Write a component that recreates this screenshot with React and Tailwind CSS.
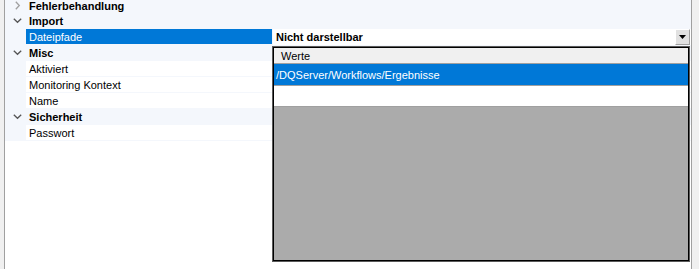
import React from "react";

const font = { fontFamily: '"Liberation Sans", Arial, sans-serif' };

function Chevron({ open, light }) {
  return (
    <svg width="9" height="9" viewBox="0 0 9 9" className="block">
      {open ? (
        <path d="M0.8 2.8 L4.5 6.3 L8.2 2.8" fill="none" stroke="#555" strokeWidth="1.3" />
      ) : (
        <path d="M2.8 0.8 L6.3 4.5 L2.8 8.2" fill="none" stroke={light ? "#a0a0a0" : "#555"} strokeWidth="1.3" />
      )}
    </svg>
  );
}

function Category({ label, open, light, first }) {
  return (
    <div className={`flex ${first ? "h-[13px] items-end" : "h-[16px]"} bg-[#f4f7fc] shrink-0`}>
      <div className="flex h-[15px] w-full items-center">
        <div className="w-[21px] flex justify-center pl-[3px]">
          <Chevron open={open} light={light} />
        </div>
        <span className="pl-[3px] pt-[1px] text-[11px] font-bold text-black leading-[15px]">{label}</span>
      </div>
    </div>
  );
}

function Prop({ label }) {
  return (
    <div className="flex h-[16px] shrink-0 bg-[#f4f7fc]">
      <div className="w-[21px] shrink-0" />
      <div className="w-[246px] h-[15px] pl-[3px] pt-[1px] text-[11px] leading-[15px] bg-white text-black">
        {label}
      </div>
      <div className="w-[1px] shrink-0" />
      <div className="flex-1 h-[15px] bg-white" />
    </div>
  );
}

export default function App() {
  return (
    <div className="relative w-[699px] h-[269px] overflow-hidden bg-[#f0f0f0] flex" style={font}>
      <div className="w-[4px] shrink-0 bg-[#f0f0f0]" />
      <div className="w-[1px] shrink-0 bg-[#a0a0a0]" />
      <div className="w-[686px] shrink-0 bg-white flex flex-col">
        <Category label="Fehlerbehandlung" open={false} light first />
        <Category label="Import" open />
        <div className="flex h-[16px] shrink-0 bg-[#f4f7fc]">
          <div className="w-[21px] shrink-0" />
          <div className="w-[246px] h-[15px] pl-[3px] pt-[1px] text-[11px] leading-[15px] bg-[#0078d7] text-white">
            Dateipfade
          </div>
          <div className="w-[1px] shrink-0" />
          <div className="flex-1 h-[16px] bg-white flex">
            <div className="flex-1 pl-[3px] pt-[1px] text-[11px] font-bold leading-[15px] text-black">Nicht darstellbar</div>
          </div>
        </div>
        <Category label="Misc" open />
        <Prop label="Aktiviert" />
        <Prop label="Monitoring Kontext" />
        <Prop label="Name" />
        <Category label="Sicherheit" open />
        <Prop label="Passwort" />
        <div className="flex-1 bg-white" />
      </div>
      <div className="w-[1px] shrink-0 bg-[#a0a0a0]" />
      <div className="flex-1 bg-[#f0f0f0]" />

      {/* dropdown button */}
      <div className="absolute left-[675px] top-[29px] w-[15px] h-[16px] bg-[#e1e1e1] border-t border-l border-t-white border-l-white border-r border-b border-r-[#a0a0a0] border-b-[#a0a0a0] flex items-center justify-center">
        <svg width="7" height="4" viewBox="0 0 7 4" className="block">
          <path d="M0 0 H7 L3.5 4 Z" fill="#000" />
        </svg>
      </div>

      {/* popup */}
      <div className="absolute left-[272px] top-[46px] w-[418px] h-[216px] border border-[#5a5a5a]">
        <div className="w-full h-full border border-black bg-[#ababab] flex flex-col">
          <div className="h-[16px] shrink-0 bg-[#f0f0f0] border-b border-[#a0a0a0] pl-[7px] pt-[1px] text-[11px] leading-[15px] text-black">
            Werte
          </div>
          <div className="h-[22px] shrink-0 bg-[#0078d7] border-b border-[#a0a0a0] pl-[2px] pt-[1px] text-[11px] leading-[20px] text-white">
            /DQServer/Workflows/Ergebnisse
          </div>
          <div className="h-[21px] shrink-0 bg-white border-b border-[#a0a0a0]" />
        </div>
      </div>
    </div>
  );
}
